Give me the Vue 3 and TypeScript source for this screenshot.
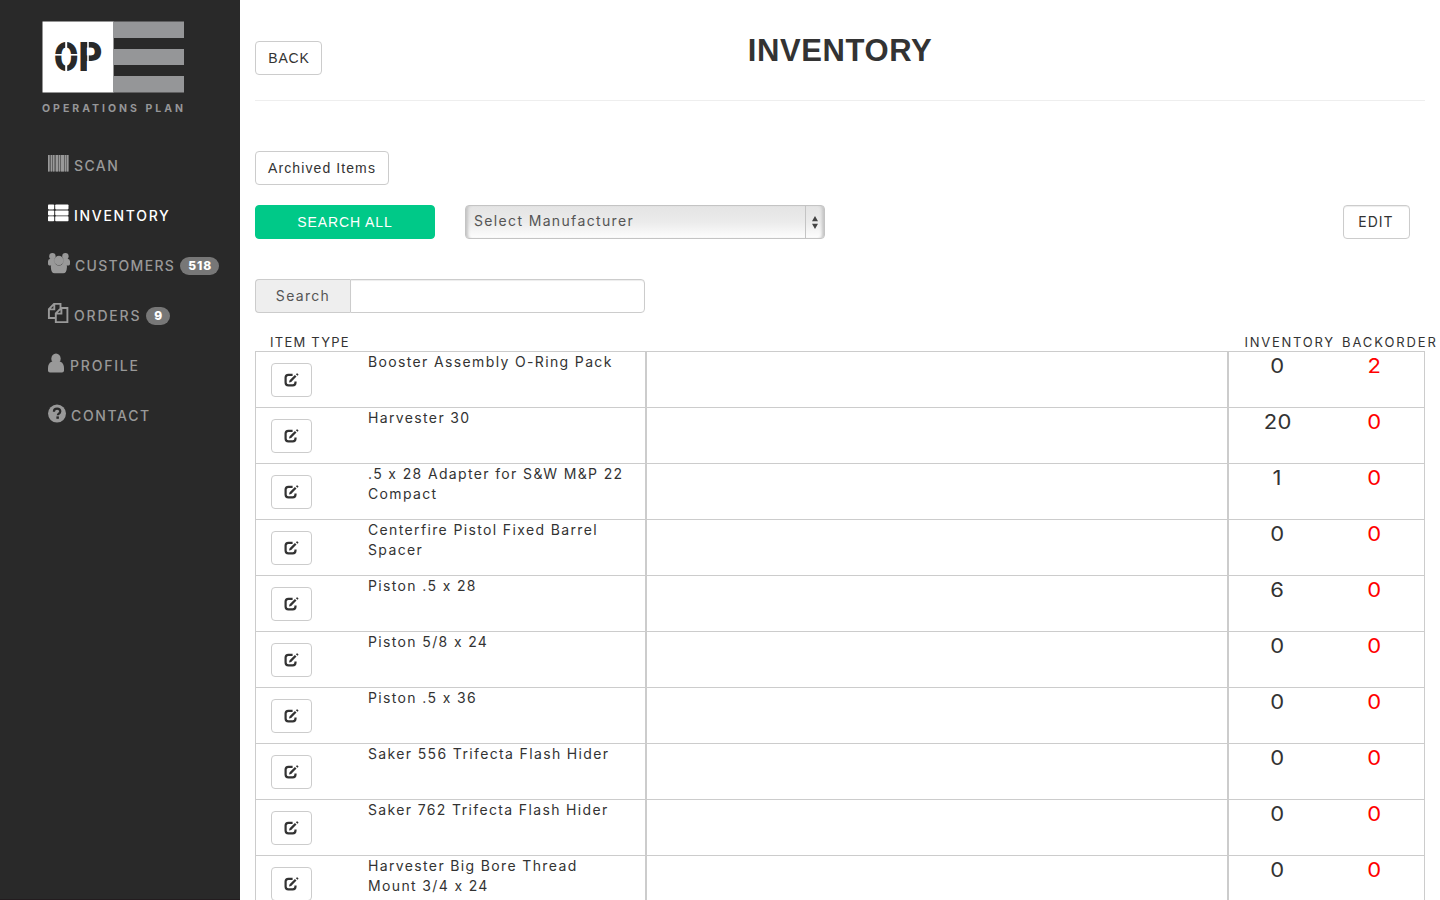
<script setup lang="ts">
interface NavItem {
  id: string
  label: string
  iconWidth: number
  tracking: number
  badge?: string
}

interface Item {
  name: string
  inventory: number
  backorder: number
}

const nav: NavItem[] = [
  { id: 'scan', label: 'SCAN', iconWidth: 26, tracking: 1.4 },
  { id: 'inventory', label: 'INVENTORY', iconWidth: 26, tracking: 1.7 },
  { id: 'customers', label: 'CUSTOMERS', iconWidth: 27, tracking: 1.3, badge: '518' },
  { id: 'orders', label: 'ORDERS', iconWidth: 26, tracking: 1.8, badge: '9' },
  { id: 'profile', label: 'PROFILE', iconWidth: 22, tracking: 1.8 },
  { id: 'contact', label: 'CONTACT', iconWidth: 23, tracking: 1.65 },
]

const items: Item[] = [
  { name: 'Booster Assembly O-Ring Pack', inventory: 0, backorder: 2 },
  { name: 'Harvester 30', inventory: 20, backorder: 0 },
  { name: '.5 x 28 Adapter for S&W M&P 22 Compact', inventory: 1, backorder: 0 },
  { name: 'Centerfire Pistol Fixed Barrel Spacer', inventory: 0, backorder: 0 },
  { name: 'Piston .5 x 28', inventory: 6, backorder: 0 },
  { name: 'Piston 5/8 x 24', inventory: 0, backorder: 0 },
  { name: 'Piston .5 x 36', inventory: 0, backorder: 0 },
  { name: 'Saker 556 Trifecta Flash Hider', inventory: 0, backorder: 0 },
  { name: 'Saker 762 Trifecta Flash Hider', inventory: 0, backorder: 0 },
  { name: 'Harvester Big Bore Thread Mount 3/4 x 24', inventory: 0, backorder: 0 },
]
</script>

<template>
  <div class="app">
    <aside class="sidebar">
      <div class="logo">
        <svg width="142" height="72" viewBox="0 0 142 72">
          <rect x="0.5" y="0.5" width="71" height="71" fill="#fff" />
          <g fill="#959698">
            <rect x="71" y="0.5" width="71" height="16.5" />
            <rect x="71" y="28" width="71" height="16" />
            <rect x="71" y="55" width="71" height="16.5" />
          </g>
          <g class="mark" fill="#292929">
            <text x="12" y="49.7" textLength="24.4" lengthAdjust="spacingAndGlyphs">O</text>
            <text x="36.5" y="49.7" textLength="24" lengthAdjust="spacingAndGlyphs">P</text>
          </g>
          <g fill="#fff">
            <rect x="23.2" y="19" width="2" height="32" />
            <rect x="11" y="33" width="26" height="1.6" />
            <rect x="45.2" y="19" width="1.6" height="32" />
          </g>
        </svg>
        <div class="tagline">OPERATIONS PLAN</div>
      </div>
      <nav>
        <a v-for="n in nav" :key="n.id" :class="['nav-item', { active: n.id === 'inventory' }]">
          <svg class="nav-icon" :width="n.iconWidth" height="22" :viewBox="`0 0 ${n.iconWidth} 22`" fill="currentColor">
            <g v-if="n.id === 'scan'">
              <rect x="0" y="3" width="20.5" height="16.5" opacity=".5" />
              <path d="M0 3h1.5v16.5H0zM3 3h1v16.5H3zM5 3h1.3v16.5H5zM8 3h2v16.5H8zM11 3h1v16.5h-1zM13 3h3v16.5h-3zM17 3h1v16.5h-1zM18.8 3h1.7v16.5h-1.7z" />
            </g>
            <g v-else-if="n.id === 'inventory'">
              <rect x="0" y="2.5" width="6.2" height="4.9" rx=".8" />
              <rect x="7.2" y="2.5" width="13.3" height="4.9" rx=".8" />
              <rect x="0" y="8.4" width="6.2" height="5" rx=".8" />
              <rect x="7.2" y="8.4" width="13.3" height="5" rx=".8" />
              <rect x="0" y="14.3" width="6.2" height="4.9" rx=".8" />
              <rect x="7.2" y="14.3" width="13.3" height="4.9" rx=".8" />
            </g>
            <g v-else-if="n.id === 'customers'">
              <circle cx="4.4" cy="4.2" r="3.2" />
              <circle cx="17.4" cy="4.2" r="3.2" />
              <path d="M0 9.2Q0 7 2.6 6.8H7L8 13.5H1.2Q0 13.5 0 11.8zM22 9.2Q22 7 19.4 6.8H15L14 13.5h6.8Q22 13.5 22 11.8z" />
              <path d="M4.7 11.5Q7 11.8 8 12.4q3 2.2 6 0 1-.6 3.2-.9 1.8.5 1.8 3.3-.2 3.6-1.2 5.2-.8 1.3-2.6 1.3H6.6q-1.8 0-2.6-1.3-1-1.6-1.2-5.2 0-2.6 1.9-3.3z" />
              <ellipse cx="10.9" cy="8.6" rx="4.7" ry="4.9" stroke="#292929" stroke-opacity=".2" stroke-width=".5" />
            </g>
            <g v-else-if="n.id === 'orders'" fill="none" stroke="currentColor" stroke-width="1.9">
              <path d="M7.5 16H.9V7.2L6 1.9h6.5V6M6.3 2v5.4H1" />
              <path d="M13.2 6h6.2v14.1H7.8v-8.7zM13.4 6v5.6H8" />
            </g>
            <g v-else-if="n.id === 'profile'">
              <ellipse cx="8" cy="6.8" rx="4.7" ry="5.2" />
              <path d="M3.4 9.8h9.2q3.4 1.8 3.4 6.2v2.4q0 2-2 2H2q-2 0-2-2V16q0-4.4 3.4-6.2z" />
            </g>
            <g v-else>
              <circle cx="9" cy="11.6" r="9" />
              <path d="M5.9 9.8Q5.9 6.7 9.1 6.7q3.2 0 3.2 2.6 0 1.5-1.5 2.4-1 .7-1 1.6" fill="none" stroke="#292929" stroke-width="2.2" />
              <rect x="8.4" y="14.4" width="2.5" height="2.4" fill="#292929" />
            </g>
          </svg>
          <span :style="{ letterSpacing: n.tracking + 'px' }">{{ n.label }}</span>
          <span v-if="n.badge" class="badge">{{ n.badge }}</span>
        </a>
      </nav>
    </aside>

    <main class="main">
      <header class="header">
        <button class="btn back">BACK</button>
        <h1>INVENTORY</h1>
      </header>

      <button class="btn archived">Archived Items</button>

      <div class="toolbar">
        <button class="btn search-all">SEARCH ALL</button>
        <div class="select">
          <span class="select-label">Select Manufacturer</span>
          <span class="select-arrows">
            <svg width="6" height="13" viewBox="0 0 6 13" fill="#444">
              <path d="M3 0l3 5.2H0zM3 13L0 7.8h6z" />
            </svg>
          </span>
        </div>
        <button class="btn edit">EDIT</button>
      </div>

      <div class="search">
        <span class="addon">Search</span>
        <input type="text" aria-label="Search" />
      </div>

      <div class="columns">
        <span class="col-type">ITEM TYPE</span>
        <span class="col-inv">INVENTORY</span>
        <span class="col-back">BACKORDER</span>
      </div>

      <section class="rows">
        <div v-for="item in items" :key="item.name" class="row">
          <div class="cell">
            <button class="btn row-edit">
              <svg width="15" height="14" viewBox="0 0 15 14">
                <path d="M8.6 1.8H4.4Q1.6 1.8 1.6 4.6v4.9q0 2.8 2.8 2.8h4.3q2.8 0 2.8-2.8V8.4" fill="none" stroke="#333" stroke-width="2.2" />
                <path d="M5 9.6l.6-2.3L10.9 2l1.6 1.6-5.3 5.3zM11.9 1.2l.8-.8q.4-.3.8 0l.8.8q.3.4 0 .8l-.8.8z" fill="#333" />
              </svg>
            </button>
            <span class="name">{{ item.name }}</span>
          </div>
          <div class="cell"></div>
          <div class="cell counts">
            <span class="count"><span class="figure">{{ item.inventory }}</span></span>
            <span class="count back-count"><span class="figure">{{ item.backorder }}</span></span>
          </div>
        </div>
      </section>
    </main>
  </div>
</template>

<style>
body {
  background: #fff;
  overflow: hidden;
}
</style>

<style scoped>
* {
  box-sizing: border-box;
}

.app {
  display: flex;
  width: 1440px;
  height: 900px;
  overflow: hidden;
  font-family: Inter, 'Liberation Sans', sans-serif;
  font-size: 14px;
  line-height: 20px;
  color: #333;
}

.sidebar {
  flex: none;
  width: 240px;
  background: #292929;
  border-bottom: 1px solid #231c1f;
}

.logo {
  height: 141px;
  padding: 21px 0 0 42px;
}

.logo svg {
  display: block;
}

.mark {
  font-family: Roboto, sans-serif;
  font-weight: 900;
  font-size: 40px;
}

.tagline {
  margin-top: 5px;
  padding-top: 1px;
  font-size: 10.5px;
  font-weight: 700;
  letter-spacing: 3px;
  color: #959698;
  white-space: nowrap;
}

.nav-item {
  display: flex;
  align-items: center;
  height: 50px;
  padding-left: 48px;
  color: #999;
  font-weight: 450;
}

.nav-item.active {
  color: #fff;
  font-weight: 500;
}

.nav-icon {
  flex: none;
  margin-top: -6px;
  overflow: visible;
}

.badge {
  height: 18px;
  margin-left: 5px;
  padding: 0 7px 0 8px;
  border-radius: 9px;
  background: #777;
  color: #fff;
  font-size: 12px;
  font-weight: 800;
  line-height: 18px;
  letter-spacing: 1px;
}

.main {
  flex: none;
  width: 1200px;
  padding: 0 15px;
}

.header {
  display: grid;
  grid-template-columns: 100px 1fr 100px;
  height: 101px;
  border-bottom: 1px solid #eee;
}

h1 {
  margin: 33px 0 0;
  font-family: 'Liberation Sans', sans-serif;
  font-size: 31px;
  font-weight: 700;
  line-height: 36px;
  letter-spacing: 0.6px;
  text-align: center;
}

.btn {
  display: block;
  height: 34px;
  padding: 0;
  border: 1px solid #ccc;
  border-radius: 4px;
  background: #fff;
  color: #333;
  font-family: 'Liberation Sans', sans-serif;
  font-size: 14px;
  line-height: 20px;
  letter-spacing: 1px;
  text-align: center;
}

.back {
  width: 67px;
  margin-top: 41px;
  padding-left: 1px;
  letter-spacing: 0.8px;
}

.archived {
  width: 134px;
  margin-top: 50px;
  letter-spacing: 1.1px;
}

.toolbar {
  display: flex;
  margin-top: 20px;
}

.search-all {
  width: 180px;
  border-color: #00c988;
  background: #00c988;
  color: #fff;
  letter-spacing: 0.9px;
}

.select {
  display: flex;
  width: 360px;
  height: 34px;
  margin-left: 30px;
  border: 1px solid #c4c4c4;
  border-radius: 4px;
  background: linear-gradient(#e4e4e4, #ebebeb 50%, #fdfdfd);
  box-shadow: inset 4px 0 3px -2px #c4c4c4, inset -4px 0 3px -2px #c4c4c4;
  color: #555;
}

.select-label {
  flex: 1;
  padding: 5px 0 0 8px;
  letter-spacing: 1.35px;
}

.select-arrows {
  display: flex;
  align-items: center;
  width: 19px;
  padding-left: 6px;
  border-left: 1px solid #c4c4c4;
}

.edit {
  width: 67px;
  margin-left: auto;
  margin-right: 15px;
  padding-right: 1px;
  font-family: Inter, sans-serif;
  box-shadow: inset 0 1px 1px rgba(0, 0, 0, 0.075);
}

.search {
  display: flex;
  width: 390px;
  height: 34px;
  margin-top: 40px;
  color: #555;
}

.addon {
  width: 95px;
  padding-top: 6px;
  border: 1px solid #ccc;
  border-right: 0;
  border-radius: 4px 0 0 4px;
  background: #eee;
  text-align: center;
  letter-spacing: 1.3px;
}

input {
  flex: 1;
  min-width: 0;
  border: 1px solid #ccc;
  border-radius: 0 4px 4px 0;
  background: #fff;
  box-shadow: inset 0 1px 1px rgba(0, 0, 0, 0.075);
}

.columns {
  display: flex;
  height: 38px;
  padding-top: 19px;
  font-size: 13px;
  letter-spacing: 1.9px;
  white-space: nowrap;
}

.col-type {
  flex: none;
  width: 975px;
  padding-left: 15px;
  margin-right: 14.5px;
  letter-spacing: 1.25px;
}

.col-inv {
  flex: none;
  width: 97.5px;
  letter-spacing: 1.75px;
}

.row {
  display: grid;
  grid-template-columns: 391px 582px 197px;
  height: 56px;
}

.cell {
  display: flex;
  align-items: flex-start;
  border: 1px solid #ccc;
  border-bottom: 0;
}

.row-edit {
  display: flex;
  flex: none;
  align-items: center;
  justify-content: center;
  width: 41px;
  margin: 11px 56px 0 15px;
}

.name {
  flex: 1;
  padding-right: 15px;
  letter-spacing: 1.36px;
}

.counts {
  padding-top: 4px;
}

.count {
  width: 97px;
  font-size: 20px;
  text-align: center;
}

.figure {
  display: inline-block;
  letter-spacing: 0.3px;
  transform: scaleX(1.1);
}

.back-count {
  color: #f00;
}
</style>
